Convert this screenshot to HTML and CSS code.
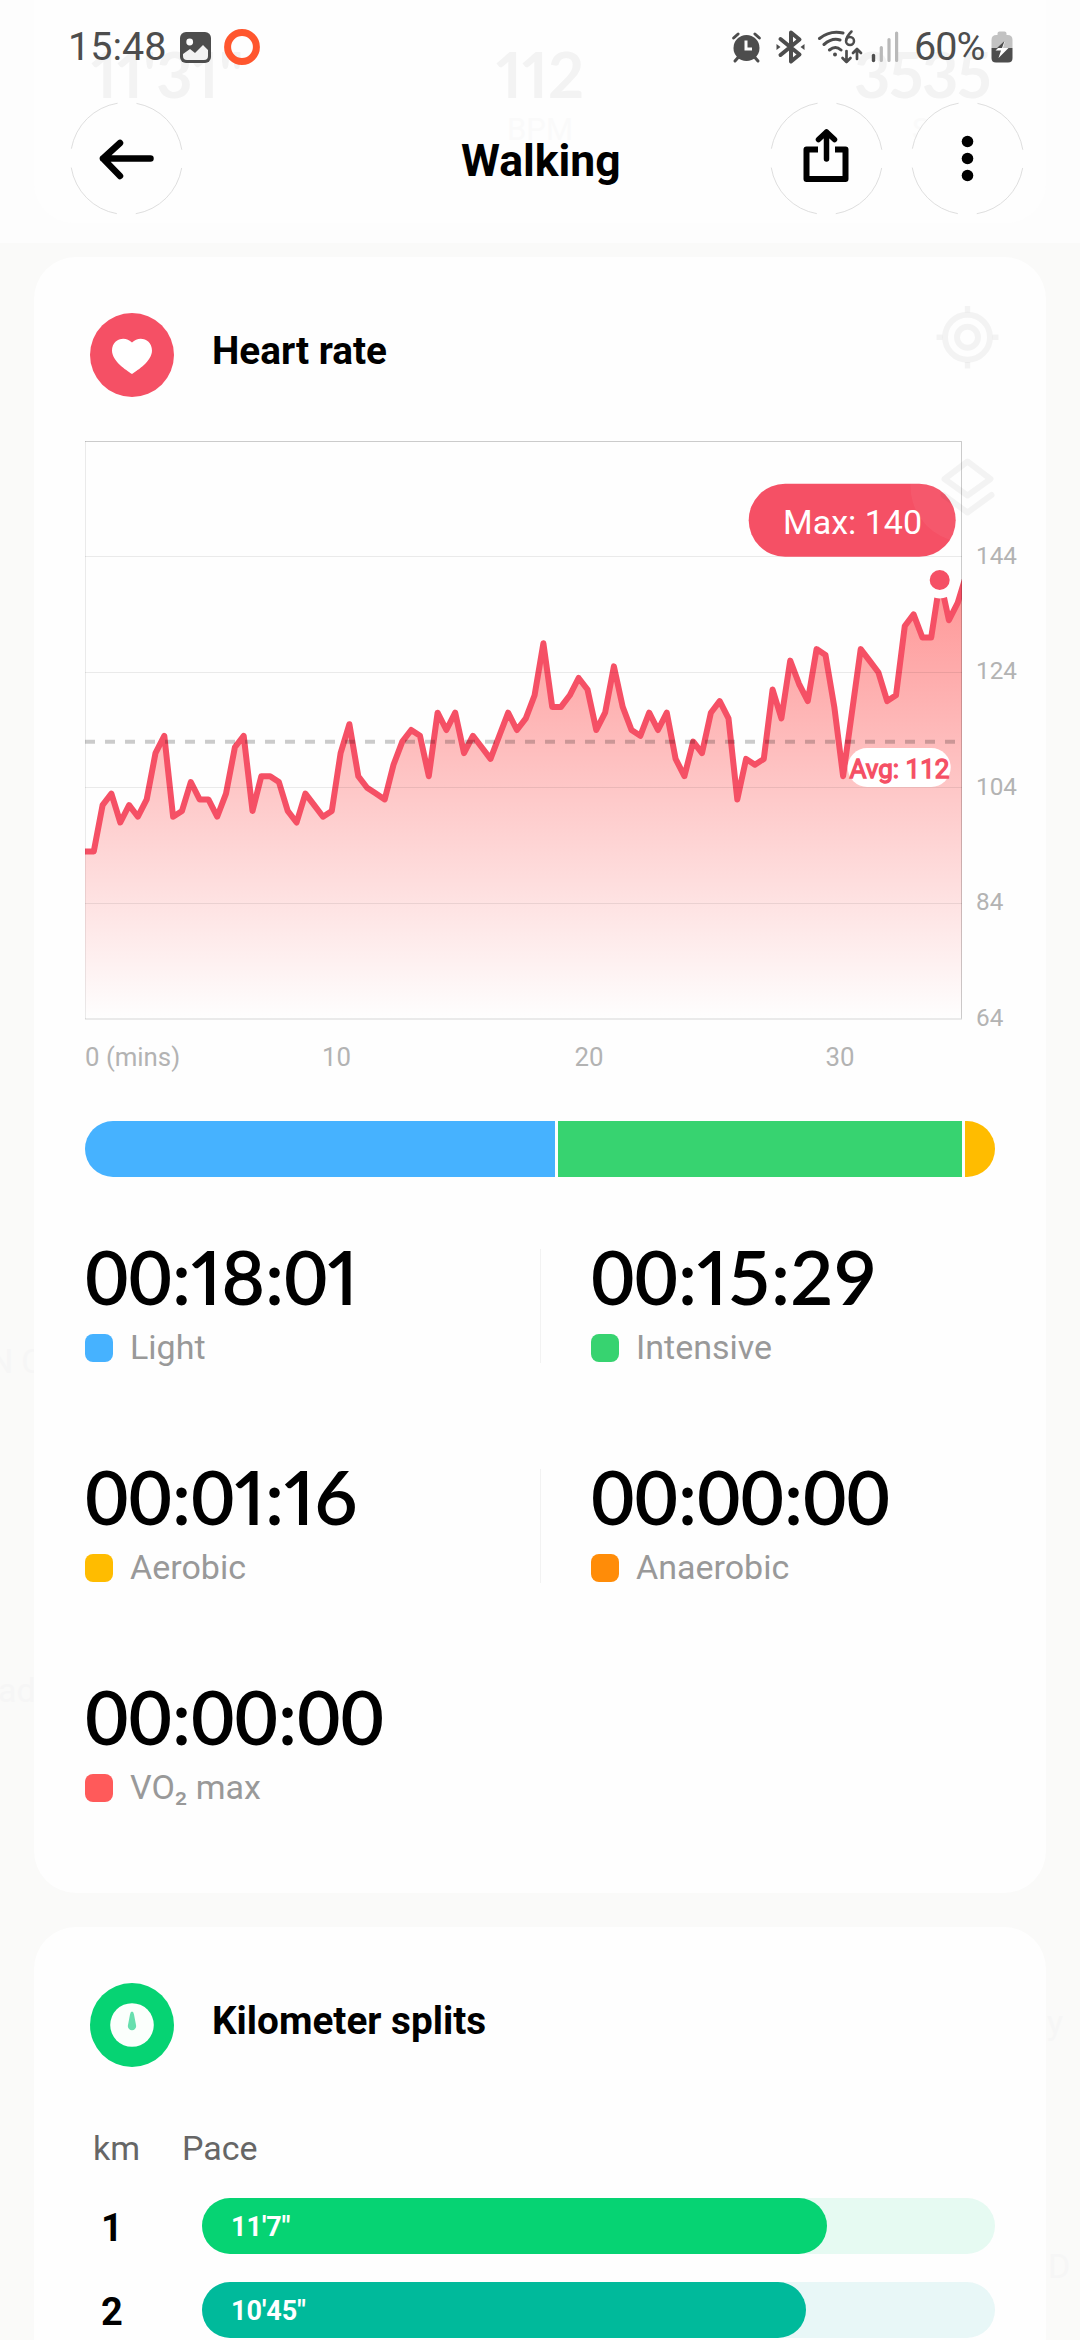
FILE: index.html
```
<!DOCTYPE html>
<html lang="en">
<head>
<meta charset="utf-8">
<title>Walking</title>
<meta name="viewport" content="width=device-width">
<link rel="stylesheet" href="styles.css">
</head>
<body>
<div class="map" aria-hidden="true">
	<span class="place nc">NC</span>
	<span class="place adi">adi</span>
	<span class="place y">y</span>
	<span class="place d">D</span>
</div>
<header>
	<div class="under" aria-hidden="true">
		<div class="pace"><b>11'31"</b></div>
		<div class="bpm"><b>112</b><small>BPM</small></div>
		<div class="steps"><b>3535</b><small>S</small></div>
	</div>
	<div class="status">
		<span class="clock">15:48</span>
		<svg class="gallery" width="31" height="31" viewBox="0 0 31 31">
			<rect width="31" height="31" rx="6" fill="#4d4d4d"/>
			<circle cx="9.7" cy="10" r="3.4" fill="#fdfdfd"/>
			<path d="M3 22l7-5 5 4 8-8 5 5v6q0 4-4 4H7q-4 0-4-4z" fill="#f2f2f2"/>
		</svg>
		<svg class="ring" width="36" height="36" viewBox="0 0 36 36"><circle cx="18" cy="18" r="14.4" fill="none" stroke="#ff562e" stroke-width="7"/></svg>
		<svg class="tray" width="174" height="36" viewBox="0 0 174 36" fill="none" stroke="#4d4d4d" stroke-linecap="round" stroke-linejoin="round">
			<!-- alarm -->
			<circle cx="15.500" cy="19" r="13" fill="#4d4d4d" stroke="none"/>
			<path d="M2.600 9l4.500-4M28.400 9l-4.500-4M4 32l3.500-4M27 32l-3.500-4" stroke-width="3"/>
			<path d="M15 11.500v8.500h6" stroke="#fdfdfd" stroke-width="3" stroke-linecap="butt" stroke-linejoin="miter"/>
			<!-- bluetooth -->
			<path d="M49.500 10l19 15.500-8.500 7V3.500l8.500 7L49.500 26" stroke-width="4"/>
			<path d="M45.500 15v6l4-3zM73.500 15v6l-4-3z" fill="#4d4d4d" stroke="none"/>
			<!-- wifi -->
			<path d="M88.500 9.500Q99 1 112 4M93 15.500q8-7 16-4.500M98.500 21q6-5 11.500 0" stroke-width="3"/>
			<circle cx="104" cy="25.500" r="2" fill="#4d4d4d" stroke="none"/>
			<path d="M120.500 2.500q-5 5-5.300 9" stroke-width="2.500"/>
			<circle cx="119" cy="12" r="4" stroke-width="2.500"/>
			<path d="M115.500 22v11m-4-4l4 4 4-4M126 30V20m-4 4l4-4 4 4" stroke-width="2.700"/>
			<!-- mobile signal -->
			<path d="M142.500 26.500v5" stroke-width="3.400"/>
			<path d="M150.300 18.500v13M158 10.500v21M165.600 4v27.500" stroke="#b9b9b9" stroke-width="3.200"/>
		</svg>
		<span class="percent">60%</span>
		<svg class="battery" width="22" height="32" viewBox="0 0 22 32">
			<path d="M6.500 4V2.500Q6.500.5 8.500.5h5q2 0 2 2V4h1q5 0 5 5v8H.5V9q0-5 5-5z" fill="#c2c2c2"/>
			<path d="M.5 17h21v10q0 4.500-4.500 4.500H5Q.5 31.500.5 27z" fill="#4d4d4d"/>
			<path d="M14 10L4.500 19.500H10L7.500 27 17.500 17H12z" fill="#fdfdfd"/>
			<path d="M13.500 10L6 17h5z" fill="#4d4d4d"/>
		</svg>
	</div>
	<div class="bar">
		<svg class="button" width="113" height="113" viewBox="0 0 113 113">
			<circle class="edge" cx="56.500" cy="56.500" r="56"/>
			<path d="M80.500 56.500H33M50 41L33 56.500 50 74" fill="none" stroke="#000" stroke-width="6.500" stroke-linecap="round" stroke-linejoin="round"/>
		</svg>
		<h1>Walking</h1>
		<svg class="button" width="113" height="113" viewBox="0 0 113 113">
			<circle class="edge" cx="56.500" cy="56.500" r="56"/>
			<path d="M48 47.500H36.500V77h39V47.500H65" fill="none" stroke="#000" stroke-width="6" stroke-linejoin="round"/>
			<path d="M56.500 57V30M48.500 37.500l8-7.500 8 7.500" fill="none" stroke="#000" stroke-width="5.500" stroke-linecap="round" stroke-linejoin="round"/>
		</svg>
		<svg class="button" width="113" height="113" viewBox="0 0 113 113">
			<circle class="edge" cx="56.500" cy="56.500" r="56"/>
			<circle cx="56.500" cy="39.500" r="5.800"/>
			<circle cx="56.500" cy="56.500" r="5.800"/>
			<circle cx="56.500" cy="73.500" r="5.800"/>
		</svg>
	</div>
</header>
<main>
	<section class="card heart">
		<div class="title">
			<svg width="84" height="84" viewBox="0 0 84 84">
				<circle cx="42" cy="42" r="42" fill="#f55065"/>
				<path d="M42 61C36 57 22 48 22 37.500 22 26 35 22 42 29.500 49 22 62 26 62 37.500 62 48 48 57 42 61z" fill="#fff"/>
			</svg>
			<h2>Heart rate</h2>
		</div>
		<svg class="chart" width="961" height="650" viewBox="85 432 961 650">
			<defs>
				<linearGradient id="fade" gradientUnits="userSpaceOnUse" x1="0" y1="441" x2="0" y2="1019">
					<stop offset="0" stop-color="#ff5252" stop-opacity=".8"/>
					<stop offset="1" stop-color="#ff5252" stop-opacity="0"/>
				</linearGradient>
				<clipPath id="plot"><rect x="85" y="441" width="877" height="578"/></clipPath>
			</defs>
			<g clip-path="url(#plot)">
				<path id="area" fill="url(#fade)"/>
				<path id="line" fill="none" stroke="#f55065" stroke-width="6" stroke-linejoin="round"/>
			</g>
			<g class="grid">
				<path d="M85 556.500h877M85 672.500h877M85 787.500h877M85 903.500h877"/>
				<path d="M85.500 441v578"/>
				<path d="M85 1019h877" stroke-width="2"/>
				<path class="dark" d="M85 441.500h876.500v577"/>
			</g>
			<path d="M85 741.700h871" stroke="#000" stroke-opacity=".2" stroke-width="4" stroke-dasharray="10 10"/>
			<circle cx="939.700" cy="580" r="18.500" fill="#fefefe"/>
			<circle cx="939.700" cy="580" r="10" fill="#f55065"/>
			<rect x="748.700" y="483.700" width="207" height="73" rx="36.500" fill="#f55065"/>
			<text class="max" x="783" y="534">Max: 140</text>
			<rect x="847.700" y="748" width="103" height="39" rx="19.500" fill="#fff"/>
			<text class="avg" x="849.500" y="777.700">Avg: 112</text>
			<g class="ylabels" id="ylabels"></g>
			<g class="xlabels">
				<text x="85" y="1066">0 (mins)</text>
				<text x="336.500" y="1066" text-anchor="middle">10</text>
				<text x="589" y="1066" text-anchor="middle">20</text>
				<text x="840" y="1066" text-anchor="middle">30</text>
			</g>
		</svg>
		<div class="zones"><i class="light"></i><i class="intensive"></i><i class="aerobic"></i></div>
		<div class="stats">
			<div class="stat"><b>00:<em>1</em>8:0<em>1</em></b><span><i class="light"></i>Light</span></div>
			<div class="stat"><b>00:<em>1</em>5:29</b><span><i class="intensive"></i>Intensive</span></div>
			<div class="stat"><b>00:0<em>1</em>:<em>1</em>6</b><span><i class="aerobic"></i>Aerobic</span></div>
			<div class="stat"><b>00:00:00</b><span><i class="anaerobic"></i>Anaerobic</span></div>
			<div class="stat"><b>00:00:00</b><span><i class="vo2"></i>VO₂ max</span></div>
		</div>
		<!-- map controls showing through the card -->
		<svg class="controls" width="120" height="270" viewBox="907 280 120 270" aria-hidden="true" fill="none" stroke="#000" stroke-opacity=".045" stroke-width="6">
			<circle cx="967.500" cy="337.300" r="22.500"/>
			<circle cx="967.500" cy="337.300" r="10.500"/>
			<path d="M967.500 306v6.500M967.500 362v6.500M936.500 337.300h6M992.500 337.300h6" stroke-width="5.500"/>
			<path d="M967.500 461.500l23 17.500-23 16.500-23-16.500zM943.500 495l24 17.500 24-17.500" stroke-linejoin="round" stroke-linecap="round"/>
			<path d="M911.500 483.700H919.500A36.500 36.500 0 0 1 950 540 57 57 0 0 1 910.500 483.700z" fill="#fff" fill-opacity=".05" stroke="none"/>
		</svg>
	</section>
	<section class="card splits">
		<div class="title">
			<svg width="84" height="84" viewBox="0 0 84 84">
				<circle cx="42" cy="42" r="42" fill="#06d373"/>
				<circle cx="42" cy="42" r="21.800" fill="#fbfffc"/>
				<path d="M42 28.500q1.500 0 2 3l2.200 11.500a4.200 4.200 0 0 1-8.400 0L40 31.500q.5-3 2-3z" fill="#67dfae"/>
			</svg>
			<h2>Kilometer splits</h2>
		</div>
		<div class="head"><span>km</span><span>Pace</span></div>
		<div class="split"><b>1</b><div class="track one"><div style="width:625px">11'7"</div></div></div>
		<div class="split"><b>2</b><div class="track two"><div style="width:604px">10'45"</div></div></div>
	</section>
</main>
<script>
const
rates = [
	93, 93, 101, 103, 98, 101, 99, 102, 110, 113, 99, 100, 105, 102, 102, 99, 103, 111, 113, 100,
	106, 106, 105, 100, 98, 103, 101, 99, 100, 110, 115, 106, 104, 103, 102, 108, 112, 114, 113, 106,
	117, 114, 117, 110, 113, 111, 109, 113, 117, 114, 116, 120, 129, 118, 118, 120, 123, 121, 114, 117,
	125, 118, 114, 113, 117, 114, 117, 109, 106, 112, 110, 117, 119, 116, 102, 109, 108, 109, 121, 116,
	126, 122, 119, 128, 127, 118, 106, 117, 128, 126, 124, 119, 120, 132, 134, 130, 130, 140, 133, 136, 141
],
step = 8.815,
rateY = rate => 1019 - (rate - 64) * 5.78,
points = rates.map((rate, i) => (85 + i * step).toFixed(1) + ' ' + rateY(rate).toFixed(1)).join('L');

document.getElementById('line').setAttribute('d', 'M' + points);
document.getElementById('area').setAttribute('d', 'M85 1019L' + points + 'V1019Z');

for (let rate of [144, 124, 104, 84, 64]) {
	let label = document.createElementNS('http://www.w3.org/2000/svg', 'text');
	label.setAttribute('x', 976);
	label.setAttribute('y', rateY(rate) + 7);
	label.textContent = rate;
	document.getElementById('ylabels').append(label);
}
</script>
</body>
</html>
```
FILE: styles.css
```
body {
	margin:0;
	position:relative;
	width:1080px;
	height:2340px;
	overflow:hidden;
	background:#fafaf9;
	font:400 34px/1.2 Roboto, sans-serif;
}
svg {
	display:block;
	flex:none;
}
h1, h2 {
	margin:0;
	font-weight:700;
}

/* map labels behind the cards */
.place {
	position:absolute;
	color:#f6f6f6;
	font-size:34px;
	line-height:40px;
}
.nc {
	left:-11px;
	top:1341px;
	letter-spacing:8px;
}
.adi {
	left:-2px;
	top:1670px;
}
.y {
	left:1047px;
	top:2002px;
}
.d {
	left:1048px;
	top:2246px;
}

/* header */
header {
	position:relative;
	box-sizing:border-box;
	height:243px;
	padding-top:27px;
	background:#fdfdfd;
}
.under {
	position:absolute;
	left:34px;
	top:0;
	width:1012px;
	height:223px;
	background:#fefefe;
	border-radius:0 0 40px 40px;
	color:#f3f3f3;
	font-family:Lato, sans-serif;
}
.under div {
	position:absolute;
	top:36px;
	text-align:center;
}
.under b {
	display:block;
	font:700 63px/76px Lato, sans-serif;
	font-feature-settings:"pnum";
}
.under small {
	display:block;
	color:#fafafa;
	font:400 31px/36px Roboto, sans-serif;
}
.under .pace {
	left:57px;
}
.under .bpm {
	left:462px;
	width:88px;
}
.under .steps {
	left:820px;
}
.under .steps b {
	letter-spacing:-1.5px;
}
.under .steps small {
	text-align:left;
	padding-left:58px;
}
.status {
	position:relative;
	display:flex;
	height:40px;
	padding:0 67px 0 68px;
	align-items:center;
	color:#4d4d4d;
	font-size:39.5px;
	line-height:40px;
}
.clock {
	width:112px;
}
.ring {
	margin-left:13px;
}
.tray {
	margin-left:auto;
	margin-right:9px;
}
.percent {
	width:77px;
	letter-spacing:-1px;
}
.bar {
	position:relative;
	display:flex;
	height:113px;
	margin-top:35px;
	padding:0 56px 0 70px;
	align-items:center;
}
.bar h1 {
	width:587px;
	box-sizing:border-box;
	padding:5px 0 0 278px;
	font-size:44.5px;
	line-height:52px;
}
.button + .button {
	margin-left:28px;
}
.edge {
	fill:#fefefe;
	stroke:#d6d6d6;
	stroke-width:.8;
	stroke-dasharray:69 19;
	stroke-dashoffset:-9.5;
}

/* cards */
main {
	position:relative;
	display:flex;
	flex-direction:column;
	gap:34px;
	padding:14px 34px 0;
}
.card {
	position:relative;
	box-sizing:border-box;
	background:#fefefe;
	border-radius:42px;
}
.heart {
	height:1636px;
	padding:56px 0 0 51px;
}
.title {
	display:flex;
	padding-left:5px;
}
.title h2 {
	padding:15px 0 0 38px;
	font-size:38.7px;
	line-height:46px;
}
.chart {
	margin-top:35px;
}
.grid path {
	fill:none;
	stroke:#000;
	stroke-opacity:.08;
}
.grid .dark {
	stroke-opacity:.2;
}
.chart text {
	font-family:Roboto, sans-serif;
}
.max {
	fill:#fff;
	font-size:34px;
}
.avg {
	fill:#f55065;
	stroke:#f55065;
	stroke-width:1.3px;
	font-size:26px;
}
.ylabels {
	fill:#b3b3b3;
	font-size:24.3px;
}
.xlabels {
	fill:#b3b3b3;
	font-size:25.8px;
}
.controls {
	position:absolute;
	left:873px;
	top:23px;
}
.light { background:#46b2ff; }
.intensive { background:#37d370; }
.aerobic { background:#ffbc00; }
.anaerobic { background:#ff8c08; }
.vo2 { background:#ff5a5a; }
.zones {
	display:flex;
	gap:3px;
	width:910px;
	height:56px;
	margin-top:39px;
	border-radius:28px;
	overflow:hidden;
}
.zones .light { width:470px; }
.zones .intensive { width:404px; }
.zones .aerobic { width:30px; }
.stats {
	display:grid;
	grid-template-columns:455px 455px;
	grid-auto-rows:114px;
	row-gap:106px;
	margin-top:72px;
}
.stat:nth-child(even) {
	border-left:1px solid #f2f2f2;
	padding-left:50px;
}
.stat b {
	display:block;
	height:81px;
	margin-top:-3px;
	font:600 75px/60px Lato, sans-serif;
	font-feature-settings:"tnum";
}
.stat em {
	font-style:normal;
	font-feature-settings:"pnum";
}
.stat span {
	display:flex;
	gap:17px;
	align-items:center;
	height:40px;
	color:#999;
	font-size:34px;
	line-height:40px;
}
.stat i {
	width:28px;
	height:28px;
	margin-top:2px;
	border-radius:8px;
}

/* splits */
.splits {
	height:460px;
	padding:56px 0 0 51px;
}
.head {
	display:flex;
	margin-top:61px;
	padding-left:8px;
	color:#666;
	line-height:40px;
}
.head span:first-child {
	width:89px;
}
.split {
	display:flex;
	align-items:center;
	height:56px;
	margin-bottom:28px;
}
.head + .split {
	margin-top:30px;
}
.split b {
	width:54px;
	padding-right:63px;
	padding-top:3px;
	font-size:38px;
	line-height:44px;
	text-align:center;
}
.track {
	width:793px;
	border-radius:28px;
}
.track div {
	box-sizing:border-box;
	height:56px;
	padding-left:29px;
	border-radius:28px;
	color:#fff;
	font-size:27px;
	font-weight:700;
	line-height:58px;
}
.one { background:#e6faf2; }
.one div { background:#06d373; }
.two { background:#e8f7f7; }
.two div { background:#00ba9b; }
```
